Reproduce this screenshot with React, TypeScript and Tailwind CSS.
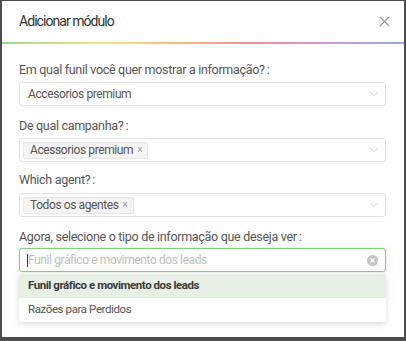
import { ChevronDown } from 'lucide-react';

function Chevron() {
  return <ChevronDown className="w-[14px] h-[14px] text-[#c8c8c8]" strokeWidth={1.25} />;
}

function Tag({ label }: { label: string }) {
  return (
    <span className="inline-flex items-center h-[17px] pl-[6px] pr-[5px] gap-[4px] bg-[#f4f4f4] border border-[#e6e6e6] rounded-[2px] text-[12px] tracking-[-0.4px] text-[#555]">
      {label}
      <span className="text-[10px] text-[#999] leading-none">×</span>
    </span>
  );
}

function Label({ text, className }: { text: string; className: string }) {
  return (
    <label className={`text-[12.5px] tracking-[-0.3px] text-[#555] leading-[18px] ${className}`}>
      {text}
      <span className="ml-[2px]">:</span>
    </label>
  );
}

export default function App() {
  return (
    <div className="w-[406px] h-[341px] bg-[#4d4d4d] pl-[2px] pr-[2px] pt-[1px] pb-[4px] font-['Roboto',sans-serif]">
      <div className="h-full bg-white flex flex-col">
        {/* header */}
        <div className="h-[41px] flex items-center justify-between pl-[17px] pr-[14px]">
          <span className="text-[14px] tracking-[-0.95px] text-[#333]">Adicionar módulo</span>
          <svg width="11" height="11" viewBox="0 0 11 11" className="text-[#999]">
            <path d="M1 1L10 10M10 1L1 10" stroke="currentColor" strokeWidth="1.1" />
          </svg>
        </div>
        <div className="h-[2px] bg-[linear-gradient(90deg,#9fd88c_0%,#f0e58a_25%,#f5b884_45%,#ef8f8f_60%,#c89ad6_82%,#94abe8_100%)]" />

        <div className="flex flex-col pl-[17px] pr-[18px] pt-[17px]">
          <Label text="Em qual funil você quer mostrar a informação?" className="" />
          <div className="mt-[3px] h-[24px] border border-[#e3e3e3] rounded-[3px] flex items-center justify-between pl-[8px] pr-[4px]">
            <span className="text-[12px] tracking-[-0.4px] text-[#555]">Accesorios premium</span>
            <Chevron />
          </div>

          <Label text="De qual campanha?" className="mt-[11px]" />
          <div className="mt-[3px] h-[24px] border border-[#e3e3e3] rounded-[3px] flex items-center justify-between pl-[3px] pr-[4px]">
            <Tag label="Acessorios premium" />
            <Chevron />
          </div>

          <Label text="Which agent?" className="mt-[9px]" />
          <div className="mt-[4px] h-[24px] border border-[#e3e3e3] rounded-[3px] flex items-center justify-between pl-[3px] pr-[4px]">
            <Tag label="Todos os agentes" />
            <Chevron />
          </div>

          <Label text="Agora, selecione o tipo de informação que deseja ver" className="mt-[11px]" />
          <div className="relative mt-[2px]">
            <div className="h-[24px] border-[1.5px] border-[#82d17d] rounded-[3px] flex items-center justify-between pl-[8px] pr-[7px] shadow-[0_0_2px_rgba(130,209,125,0.5)]">
              <span className="flex items-center text-[12px] tracking-[-0.4px] text-[#bdbdbd]">
                <span className="w-px h-[13px] bg-[#333] -ml-[1px]" />
                Funil gráfico e movimento dos leads
              </span>
              <span className="w-[11px] h-[11px] rounded-full bg-[#c4c4c4] flex items-center justify-center">
                <svg width="5" height="5" viewBox="0 0 5 5">
                  <path d="M0.5 0.5L4.5 4.5M4.5 0.5L0.5 4.5" stroke="white" strokeWidth="1.1" />
                </svg>
              </span>
            </div>
            <div className="absolute left-0 right-0 top-[26px] bg-white rounded-[3px] shadow-[0_2px_6px_rgba(0,0,0,0.15)] overflow-hidden">
              <div className="h-[24px] bg-[#e6f0e4] flex items-center pl-[9px] text-[11.5px] tracking-[-0.45px] font-bold text-[#3a3a3a]">
                Funil gráfico e movimento dos leads
              </div>
              <div className="h-[24px] flex items-center pl-[9px] text-[11.5px] tracking-[-0.4px] text-[#555]">
                Razões para Perdidos
              </div>
            </div>
          </div>
        </div>
      </div>
    </div>
  );
}
